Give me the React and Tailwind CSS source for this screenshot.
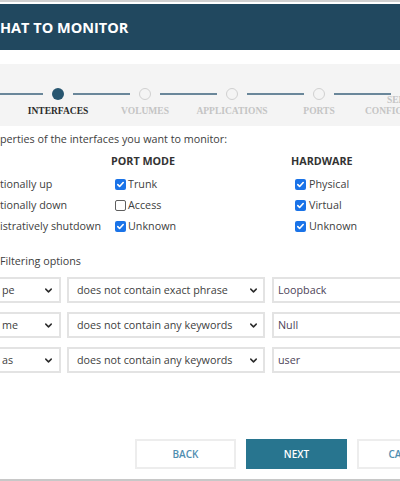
import { ChevronDown } from "lucide-react";

const steps = ["INTERFACES", "VOLUMES", "APPLICATIONS", "PORTS"];

const statusRows = [
  { label: "tionally up", port: "Trunk", portOn: true, hw: "Physical", hwOn: true },
  { label: "tionally down", port: "Access", portOn: false, hw: "Virtual", hwOn: true },
  { label: "istratively shutdown", port: "Unknown", portOn: true, hw: "Unknown", hwOn: true },
];

const filters = [
  { field: "pe", op: "does not contain exact phrase", value: "Loopback" },
  { field: "me", op: "does not contain any keywords", value: "Null" },
  { field: "as", op: "does not contain any keywords", value: "user" },
];

function Check({ on }) {
  if (!on) {
    return <span className="w-[11px] h-[11px] rounded-[2px] border border-[#5f5f5f] bg-white shrink-0" />;
  }
  return (
    <span className="w-[11px] h-[11px] rounded-[2px] bg-[#1a73e8] flex items-center justify-center shrink-0">
      <svg viewBox="0 0 10 10" className="w-[9px] h-[9px]">
        <path d="M2 5.2l2 2L8 2.8" fill="none" stroke="white" strokeWidth="1.8" strokeLinecap="round" strokeLinejoin="round" />
      </svg>
    </span>
  );
}

function Dot({ active, className = "" }) {
  return active ? (
    <span className={"w-[12px] h-[12px] rounded-full bg-[#285670] shrink-0 " + className} />
  ) : (
    <span className={"w-[12px] h-[12px] rounded-full border-[1.5px] border-[#d0d0d0] shrink-0 " + className} />
  );
}

function Line({ w }) {
  return <span className="h-[2px] bg-[#6a879a] shrink-0" style={{ width: w }} />;
}

export default function App() {
  return (
    <div className="w-[400px] h-[481px] overflow-hidden bg-white flex flex-col font-['Open_Sans',sans-serif] text-[10.75px] text-[#404040]">
      <div className="h-[2px] bg-[#d0d0d0] shrink-0" />
      <div className="h-[2px] shrink-0" />
      <div className="h-[46px] bg-[#21485f] flex items-center shrink-0 pt-[1px]">
        <h1 className="text-white font-bold text-[14.5px] whitespace-nowrap">HAT TO MONITOR</h1>
      </div>
      <div className="h-[14px] shrink-0" />

      {/* stepper */}
      <div className="h-[62px] bg-[#f4f4f4] overflow-hidden shrink-0">
        <div className="flex items-center gap-[9px] mt-[24px] h-[12px]">
          <Line w={43} />
          <Dot active />
          <Line w={57} />
          <Dot />
          <Line w={57} />
          <Dot />
          <Line w={57} />
          <Dot />
          <Line w={57} />
          <Dot className="self-start -mt-[11px]" />
        </div>
        <div className="flex items-start mt-[6px] pl-[14.5px] font-['Liberation_Serif',serif] font-bold text-[9.5px] leading-[11px] whitespace-nowrap">
          {steps.map((s, i) => (
            <div key={s} className={"w-[87px] shrink-0 text-center " + (i === 0 ? "text-[#2b2b2b]" : "text-[#c4c4c4]")}>
              {s}
            </div>
          ))}
          <div className="w-[87px] shrink-0 text-center text-[#c4c4c4] -mt-[11px]">
            SERVER
            <br />
            CONFIGURATION
          </div>
        </div>
      </div>

      <p className="mt-[6px] leading-[15px] whitespace-nowrap">perties of the interfaces you want to monitor:</p>

      {/* status checkboxes */}
      <div className="grid grid-cols-[111px_180px_1fr] mt-[6.5px] whitespace-nowrap">
        <div />
        <div className="font-bold text-[#333] leading-[15px]">PORT MODE</div>
        <div className="font-bold text-[#333] leading-[15px]">HARDWARE</div>
      </div>
      <div className="mt-[5px] flex flex-col whitespace-nowrap">
        {statusRows.map((r) => (
          <div key={r.label} className="grid grid-cols-[111px_180px_1fr] h-[21px] items-center">
            <span>{r.label}</span>
            <span className="flex items-center gap-[2px] pl-[4px]">
              <Check on={r.portOn} />
              {r.port}
            </span>
            <span className="flex items-center gap-[3px] pl-[4px]">
              <Check on={r.hwOn} />
              {r.hw}
            </span>
          </div>
        ))}
      </div>

      <p className="mt-[17.5px] leading-[15px] whitespace-nowrap">Filtering options</p>

      {/* filter rows */}
      <div className="mt-[8px] flex flex-col gap-[9px]">
        {filters.map((f) => (
          <div key={f.value} className="flex h-[26px] whitespace-nowrap">
            <div className="w-[63px] -ml-[2px] shrink-0 border-2 border-[#e3e3e3] flex items-center justify-between pl-[2px] pr-[5px]">
              <span>{f.field}</span>
              <ChevronDown size={11} strokeWidth={3.2} className="text-[#2a2a2a]" />
            </div>
            <div className="w-[198px] ml-[6px] shrink-0 border-2 border-[#e3e3e3] flex items-center justify-between pl-[8px] pr-[4px]">
              <span>{f.op}</span>
              <ChevronDown size={11} strokeWidth={3.2} className="text-[#2a2a2a]" />
            </div>
            <div className="w-[140px] ml-[7px] shrink-0 border-2 border-[#e3e3e3] flex items-center pl-[4px] text-[#4d4358]">
              {f.value}
            </div>
          </div>
        ))}
      </div>

      <div className="flex-1" />

      {/* buttons */}
      <div className="flex pl-[135px] gap-[10px] h-[30px] mb-[10px] text-[10px] font-semibold whitespace-nowrap">
        <button className="w-[101px] shrink-0 border-2 border-[#ededed] bg-white text-[#4f8db0]">BACK</button>
        <button className="w-[101px] shrink-0 bg-[#28758f] text-white">NEXT</button>
        <button className="w-[101px] shrink-0 border-2 border-[#ededed] bg-white text-[#4f8db0]">CANCEL</button>
      </div>
      <div className="h-[2px] bg-[#c8c8c8] shrink-0" />
    </div>
  );
}
